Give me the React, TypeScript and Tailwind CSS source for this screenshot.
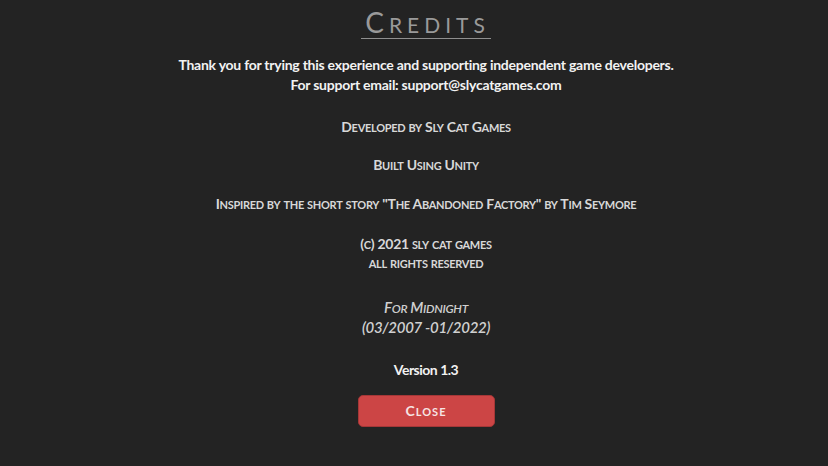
function SC({ text, sm }: { text: string; sm: string }) {
  const parts = text.match(/[a-z]+|[^a-z]+/g) || [];
  return (
    <>
      {parts.map((p, i) =>
        /[a-z]/.test(p) ? (
          <span key={i} className={sm}>
            {p.toUpperCase()}
          </span>
        ) : (
          <span key={i}>{p}</span>
        )
      )}
    </>
  );
}

export default function App() {
  return (
    <div
      className="w-[828px] h-[466px] bg-[#232323] flex flex-col items-center text-center overflow-hidden pl-[24px]"
      style={{ fontFamily: "Lato, 'Open Sans', sans-serif" }}
    >
      <div className="mt-[6px] text-[28px] leading-[32px] text-[#9a9a9a] tracking-[5px] border-b border-[#8f8f8f] pl-[4px] pr-[1px]">
        <SC text="Credits" sm="text-[21px] leading-none" />
      </div>
      <div className="mt-[16px] text-[14px] leading-[20px] font-bold tracking-[-0.25px] text-[#f2f2f2]">
        <div>Thank you for trying this experience and supporting independent game developers.</div>
        <div>For support email: support@slycatgames.com</div>
      </div>
      <div className="mt-[23px] text-[14px] leading-[18px] font-bold tracking-[-0.3px] text-[#d8d8d8]">
        <SC text="Developed by Sly Cat Games" sm="text-[11px] leading-none" />
      </div>
      <div className="mt-[20px] text-[14px] leading-[18px] font-bold tracking-[-0.3px] text-[#d8d8d8]">
        <SC text="Built Using Unity" sm="text-[11px] leading-none" />
      </div>
      <div className="mt-[21px] text-[14px] leading-[18px] font-bold tracking-[-0.3px] text-[#d8d8d8]">
        <SC text={'Inspired by the short story "The Abandoned Factory" by Tim Seymore'} sm="text-[11px] leading-none" />
      </div>
      <div className="mt-[21px] text-[14px] leading-[19px] font-bold tracking-[-0.3px] text-[#d8d8d8]">
        <div>
          <SC text="(c) 2021 sly cat games" sm="text-[11px] leading-none" />
        </div>
        <div>
          <SC text="all rights reserved" sm="text-[11px] leading-none" />
        </div>
      </div>
      <div className="mt-[25px] text-[15px] leading-[20px] italic font-semibold tracking-[-0.3px] text-[#d0d0d0]">
        <div>
          <SC text="For Midnight" sm="text-[12px] leading-none" />
        </div>
        <div>(03/2007 -01/2022)</div>
      </div>
      <div className="mt-[23px] text-[14px] leading-[20px] font-bold tracking-[-0.5px] text-[#f2f2f2]">Version 1.3</div>
      <button className="mt-[15px] w-[137px] h-[32px] rounded-[5px] bg-[#cc4545] border border-[#a53737] text-[14px] leading-none font-bold text-[#f6e4e4] tracking-[1px]">
        <SC text="Close" sm="text-[11px] leading-none" />
      </button>
    </div>
  );
}
